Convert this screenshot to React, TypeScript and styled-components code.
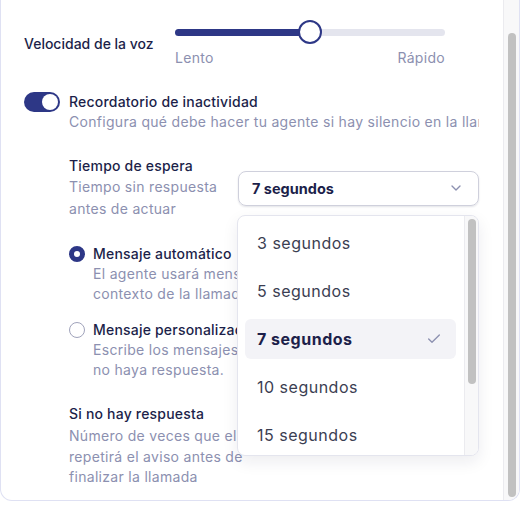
import styled, { createGlobalStyle } from "styled-components"

const GlobalStyle = createGlobalStyle`
  body {
    margin: 0;
    background: #ffffff;
    font-family: Inter, "Noto Sans", sans-serif;
    -webkit-font-smoothing: antialiased;
  }
`

const NAVY = "#2d3786"
const DARK = "#1c1f4a"
const MUTED = "#8c90b0"

const Panel = styled.div`
  width: 520px;
  height: 501px;
  box-sizing: border-box;
  border: 1px solid #dfe1f3;
  border-top: none;
  border-radius: 0 0 12px 12px;
  overflow: hidden;
  background: #fff;
  display: flex;
`

const Content = styled.div`
  flex: 1;
  min-width: 0;
  padding: 20px 24px 12px 23px;
  display: flex;
  flex-direction: column;
  gap: 24px;
`

const ScrollTrack = styled.div<{ $pad: string; $thumb: string }>`
  flex: 0 0 auto;
  box-sizing: border-box;
  display: flex;
  flex-direction: column;
  padding: ${(p) => p.$pad};
  background: #f8f8f9;
  border-left: 1px solid #ebebef;

  &::before {
    content: "";
    display: block;
    width: 8px;
    height: ${(p) => p.$thumb};
    border-radius: 4px;
    background: #c1c1c1;
  }
`

const SpeedRow = styled.div`
  display: flex;
  align-items: center;
`

const FieldLabel = styled.div<{ $width?: string }>`
  flex: 0 0 ${(p) => p.$width ?? "auto"};
  font-size: 14px;
  line-height: 20px;
  font-weight: 500;
  color: ${DARK};
`

const Slider = styled.div`
  width: 270px;
`

const SliderTrack = styled.div`
  position: relative;
  height: 24px;
  display: flex;
  align-items: center;
`

const TrackBar = styled.div`
  width: 100%;
  height: 7px;
  border-radius: 4px;
  background: #e4e5ee;
  overflow: hidden;
`

const TrackFill = styled.div`
  height: 100%;
  background: ${NAVY};
`

const SliderThumb = styled.div`
  position: absolute;
  top: 0;
  width: 24px;
  height: 24px;
  box-sizing: border-box;
  border-radius: 50%;
  border: 2px solid ${NAVY};
  background: #fff;
  transform: translateX(-50%);
`

const SliderLabels = styled.div`
  display: flex;
  justify-content: space-between;
  margin-top: 4px;
  font-size: 14px;
  line-height: 20px;
  letter-spacing: 0.3px;
  color: ${MUTED};
`

const ToggleHeader = styled.div`
  display: flex;
  align-items: flex-start;
  gap: 9px;
`

const Toggle = styled.div<{ $on: boolean }>`
  flex: 0 0 36px;
  height: 20px;
  box-sizing: border-box;
  padding: 2px;
  border-radius: 10px;
  background: ${(p) => (p.$on ? NAVY : "#d4d6e4")};
  display: flex;
  justify-content: ${(p) => (p.$on ? "flex-end" : "flex-start")};
`

const ToggleKnob = styled.div`
  width: 16px;
  height: 16px;
  border-radius: 50%;
  background: #fff;
`

const HeaderText = styled.div`
  flex: 1;
  min-width: 0;
`

const Title = styled.div`
  font-size: 14px;
  line-height: 20px;
  font-weight: 500;
  letter-spacing: 0.2px;
  color: ${DARK};
`

const Hint = styled.div<{ $lh?: number; $nowrap?: boolean; $clip?: boolean; $gap?: number }>`
  margin-top: ${(p) => p.$gap ?? 0}px;
  font-size: 14px;
  line-height: ${(p) => p.$lh ?? 20}px;
  letter-spacing: 0.3px;
  color: ${MUTED};
  white-space: ${(p) => (p.$nowrap ? "nowrap" : "normal")};
  overflow: ${(p) => (p.$clip ? "hidden" : "visible")};
`

const SubSettings = styled.div`
  padding-left: 45px;
  display: flex;
  flex-direction: column;
  gap: 24px;
`

const TimeoutRow = styled.div`
  display: flex;
  align-items: center;
`

const LeftColumn = styled.div<{ $width: number }>`
  flex: 0 0 ${(p) => p.$width}px;
  width: ${(p) => p.$width}px;
`

const SelectWrap = styled.div`
  position: relative;
  width: 241px;
`

const SelectTrigger = styled.div`
  height: 35px;
  box-sizing: border-box;
  border: 1px solid #cfd0dc;
  border-radius: 8px;
  box-shadow: 0 1px 2px rgba(20, 24, 60, 0.12);
  padding: 0 14px 0 13px;
  display: flex;
  align-items: center;
  justify-content: space-between;
  font-size: 14.5px;
  font-weight: 700;
  color: ${DARK};
`

const Popup = styled.div`
  position: absolute;
  z-index: 10;
  top: calc(100% + 9px);
  left: -1px;
  width: 242px;
  height: 241px;
  box-sizing: border-box;
  border: 1px solid #e4e5ee;
  border-radius: 8px;
  background: #fff;
  box-shadow: 0 6px 16px rgba(20, 24, 60, 0.08);
  overflow: hidden;
  display: flex;
`

const OptionList = styled.div`
  flex: 1;
  min-width: 0;
  overflow: hidden;
  padding: 7px 8px 7px 7px;
  display: flex;
  flex-direction: column;
  gap: 8px;
`

const Option = styled.div<{ $selected?: boolean }>`
  flex: 0 0 40px;
  box-sizing: border-box;
  padding: 0 14px 0 12px;
  border-radius: 6px;
  display: flex;
  align-items: center;
  justify-content: space-between;
  font-size: 16px;
  letter-spacing: 0.5px;
  font-weight: ${(p) => (p.$selected ? 700 : 400)};
  color: ${(p) => (p.$selected ? DARK : "#3b3e52")};
  background: ${(p) => (p.$selected ? "#f3f3f7" : "transparent")};
`

const RadioGroup = styled.div`
  display: flex;
  flex-direction: column;
  gap: 16px;
`

const RadioItem = styled.div`
  display: flex;
  align-items: flex-start;
  gap: 8px;
`

const RadioCircle = styled.div<{ $checked: boolean }>`
  flex: 0 0 16px;
  height: 16px;
  margin-top: 2px;
  box-sizing: border-box;
  border-radius: 50%;
  border: ${(p) => (p.$checked ? `5px solid ${NAVY}` : "1.5px solid #a0a3bb")};
  background: #fff;
`

const ChevronDown = () => (
  <svg width="16" height="16" viewBox="0 0 24 24" fill="none" stroke={MUTED} strokeWidth="2" strokeLinecap="round" strokeLinejoin="round">
    <polyline points="6 9 12 15 18 9" />
  </svg>
)

const Check = () => (
  <svg width="16" height="16" viewBox="0 0 24 24" fill="none" stroke={MUTED} strokeWidth="2" strokeLinecap="round" strokeLinejoin="round">
    <polyline points="20 6 9 17 4 12" />
  </svg>
)

const timeouts = [3, 5, 7, 10, 15, 20, 30]

export default function App() {
  const speed = 50

  return (
    <>
      <GlobalStyle />
      <Panel>
        <Content>
          <SpeedRow>
            <FieldLabel $width="151px">Velocidad de la voz</FieldLabel>
            <Slider>
              <SliderTrack>
                <TrackBar>
                  <TrackFill style={{ width: `${speed}%` }} />
                </TrackBar>
                <SliderThumb style={{ left: `${speed}%` }} />
              </SliderTrack>
              <SliderLabels>
                <span>Lento</span>
                <span>Rápido</span>
              </SliderLabels>
            </Slider>
          </SpeedRow>

          <ToggleHeader>
            <Toggle $on>
              <ToggleKnob />
            </Toggle>
            <HeaderText>
              <Title>Recordatorio de inactividad</Title>
              <Hint $nowrap $clip>
                Configura qué debe hacer tu agente si hay silencio en la llamada.
              </Hint>
            </HeaderText>
          </ToggleHeader>

          <SubSettings>
            <TimeoutRow>
              <LeftColumn $width={169}>
                <Title>Tiempo de espera</Title>
                <Hint $lh={22}>
                  Tiempo sin respuesta
                  <br />
                  antes de actuar
                </Hint>
              </LeftColumn>
              <SelectWrap>
                <SelectTrigger>
                  <span>7 segundos</span>
                  <ChevronDown />
                </SelectTrigger>
                <Popup>
                  <OptionList>
                    {timeouts.map((t) => (
                      <Option key={t} $selected={t === 7}>
                        <span>{t} segundos</span>
                        {t === 7 && <Check />}
                      </Option>
                    ))}
                  </OptionList>
                  <ScrollTrack $pad="3px 2px 0 3px" $thumb="165px" />
                </Popup>
              </SelectWrap>
            </TimeoutRow>

            <RadioGroup>
              <RadioItem>
                <RadioCircle $checked />
                <div>
                  <Title>Mensaje automático</Title>
                  <Hint>
                    El agente usará mensajes adaptados al
                    <br />
                    contexto de la llamada.
                  </Hint>
                </div>
              </RadioItem>
              <RadioItem>
                <RadioCircle $checked={false} />
                <div>
                  <Title>Mensaje personalizado</Title>
                  <Hint>
                    Escribe los mensajes que dirá el agente cuando
                    <br />
                    no haya respuesta.
                  </Hint>
                </div>
              </RadioItem>
            </RadioGroup>

            <LeftColumn $width={190}>
              <Title>Si no hay respuesta</Title>
              <Hint $lh={20.5} $gap={2} $nowrap>
                Número de veces que el agente
                <br />
                repetirá el aviso antes de
                <br />
                finalizar la llamada
              </Hint>
            </LeftColumn>
          </SubSettings>
        </Content>
        <ScrollTrack $pad="33px 3px 0 4px" $thumb="464px" />
      </Panel>
    </>
  )
}
